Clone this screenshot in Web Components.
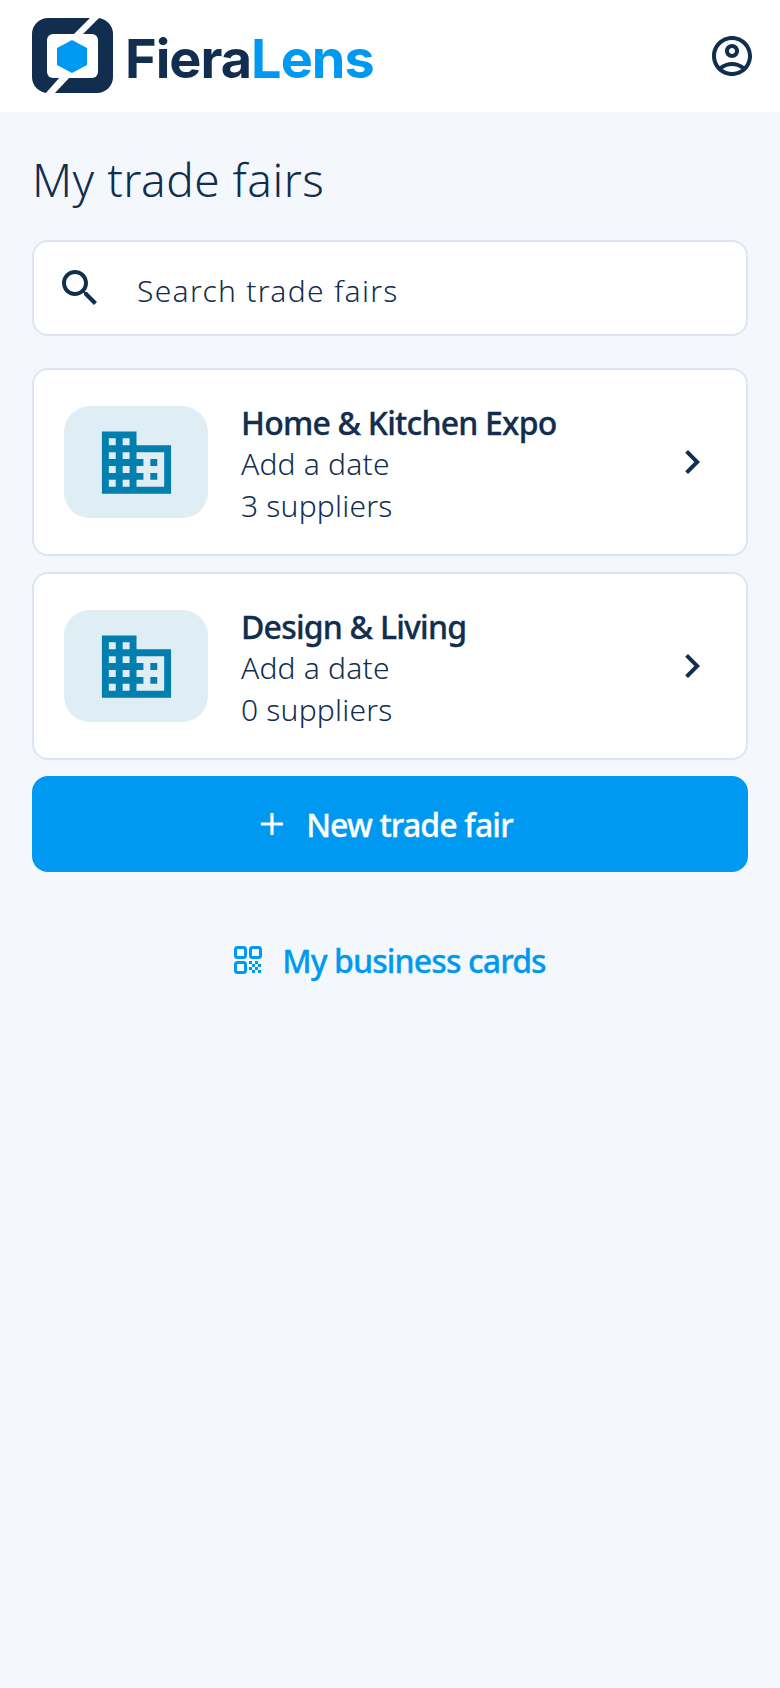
<!DOCTYPE html>
<html lang="en">
<head>
<meta charset="utf-8">
<title>FieraLens</title>
<style>
  html, body { margin: 0; padding: 0; background: #f4f8fd; }
  body { width: 780px; min-height: 1688px; font-family: "Noto Sans", "Open Sans", sans-serif; color: #112e4e; }
</style>
</head>
<body>
<app-header></app-header>
<fairs-page>
  <fair-card name="Home &amp; Kitchen Expo" date="Add a date" suppliers="3 suppliers"></fair-card>
  <fair-card name="Design &amp; Living" date="Add a date" suppliers="0 suppliers"></fair-card>
</fairs-page>

<script>
// --- Material paths ---
const ICONS = {
    account: 'M12 2C6.48 2 2 6.48 2 12s4.48 10 10 10 10-4.48 10-10S17.52 2 12 2zM7.35 18.5C8.66 17.56 10.26 17 12 17s3.34.56 4.65 1.5C15.34 19.44 13.74 20 12 20s-3.34-.56-4.65-1.5zm10.79-1.38C16.45 15.8 14.32 15 12 15s-4.45.8-6.14 2.12C4.7 15.73 4 13.95 4 12c0-4.42 3.58-8 8-8s8 3.58 8 8c0 1.95-.7 3.73-1.86 5.12zM12 6c-1.93 0-3.5 1.57-3.5 3.5S10.07 13 12 13s3.5-1.57 3.5-3.5S13.93 6 12 6zm0 5c-.83 0-1.5-.67-1.5-1.5S11.17 8 12 8s1.5.67 1.5 1.5S12.83 11 12 11z',
    search: 'M15.5 14h-.79l-.28-.27C15.41 12.59 16 11.11 16 9.5 16 5.91 13.09 3 9.5 3S3 5.91 3 9.5 5.91 16 9.5 16c1.61 0 3.09-.59 4.23-1.57l.27.28v.79l5 4.99L20.49 19l-4.99-5zm-6 0C7.01 14 5 11.99 5 9.5S7.01 5 9.5 5 14 7.01 14 9.5 11.99 14 9.5 14z',
    domain: 'M12 7V3H2v18h20V7H12zM6 19H4v-2h2v2zm0-4H4v-2h2v2zm0-4H4V9h2v2zm0-4H4V5h2v2zm4 12H8v-2h2v2zm0-4H8v-2h2v2zm0-4H8V9h2v2zm0-4H8V5h2v2zm10 12h-8v-2h2v-2h-2v-2h2v-2h-2V9h8v10zm-2-8h-2v2h2v-2zm0 4h-2v2h2v-2z',
    chevron: 'M10 6L8.59 7.41 13.17 12l-4.58 4.59L10 18l6-6z',
    add: 'M19 13h-6v6h-2v-6H5v-2h6V5h2v6h6v2z'
};

class AppIcon extends HTMLElement {
    connectedCallback() {
        const size = this.getAttribute('size') || 48;
        this.attachShadow({ mode: 'open' }).innerHTML = `
            <style>
                :host { display: block; flex: none; width: ${size}px; height: ${size}px; }
                svg { display: block; width: 100%; height: 100%; fill: currentColor; }
            </style>
            <svg viewBox="0 0 24 24"><path d="${ICONS[this.getAttribute('name')]}"/></svg>
        `;
    }
}

class AppHeader extends HTMLElement {
    connectedCallback() {
        this.attachShadow({ mode: 'open' }).innerHTML = `
            <style>
                :host {
                    display: flex;
                    align-items: center;
                    justify-content: space-between;
                    height: 112px;
                    padding: 0 24px 0 32px;
                    background: #fff;
                    color: #112e4e;
                }
                .logo { display: flex; align-items: center; gap: 11px; }
                svg { display: block; }
                .word {
                    padding-top: 5px;
                    font-family: Inter, sans-serif;
                    font-weight: 700;
                    font-size: 54px;
                    line-height: 60px;
                    letter-spacing: -1px;
                    color: #112e4e;
                }
                .word b { font-weight: 700; color: #0099f2; }
            </style>
            <div class="logo">
                <svg width="82" height="76" viewBox="32 18 82 76">
                    <rect x="32" y="18" width="81" height="75" rx="16" fill="#112e4e"/>
                    <rect x="47" y="34" width="51" height="44" rx="6" fill="#fff"/>
                    <path d="M90 18h9L83 34h-9zM60 77h10L54 94h-9z" fill="#fff"/>
                    <path d="M72 40l15 8v17l-15 8-15-8V48z" fill="#0099f2"/>
                </svg>
                <span class="word">Fiera<b>Lens</b></span>
            </div>
            <app-icon name="account"></app-icon>
        `;
    }
}

class FairsPage extends HTMLElement {
    connectedCallback() {
        this.attachShadow({ mode: 'open' }).innerHTML = `
            <style>
                :host { display: block; padding: 30px 32px 0; }
                h1 {
                    margin: 0 0 24px;
                    font-size: 46px;
                    line-height: 74px;
                    font-weight: 300;
                    letter-spacing: 0.5px;
                    color: #112e4e;
                }
                .list { display: flex; flex-direction: column; gap: 16px; margin: 32px 0 16px; }
                a {
                    display: flex;
                    align-items: center;
                    justify-content: center;
                    gap: 20px;
                    margin-top: 64px;
                    height: 48px;
                    font-size: 32px;
                    font-weight: 500;
                    letter-spacing: -0.9px;
                    -webkit-text-stroke: 0.3px #0099f2;
                    color: #0099f2;
                    text-decoration: none;
                }
            </style>
            <h1>My trade fairs</h1>
            <search-box>Search trade fairs</search-box>
            <div class="list"><slot></slot></div>
            <primary-button>New trade fair</primary-button>
            <a href="#">
                <svg width="28" height="28" viewBox="0 0 28 28" fill="none" stroke="#0099f2" stroke-width="3">
                    <rect x="1.5" y="1.5" width="10" height="10" rx="2"/>
                    <rect x="16.5" y="1.5" width="10" height="10" rx="2"/>
                    <rect x="1.5" y="16.5" width="10" height="10" rx="2"/>
                    <path stroke="none" fill="#0099f2" d="M15 15h3v3h-3zM21 15h3v3h-3zM18 18h3v3h-3zM24 18h3v3h-3zM15 21h3v3h-3zM21 21h3v3h-3zM18 24h3v3h-3zM24 24h3v3h-3z"/>
                </svg>
                <span>My business cards</span>
            </a>
        `;
    }
}

class SearchBox extends HTMLElement {
    connectedCallback() {
        this.attachShadow({ mode: 'open' }).innerHTML = `
            <style>
                :host {
                    display: flex;
                    align-items: center;
                    gap: 33px;
                    box-sizing: border-box;
                    height: 96px;
                    padding: 0 22px;
                    background: #fff;
                    border: 2px solid #dbe6f2;
                    border-radius: 16px;
                    font-size: 30px;
                    font-weight: 300;
                    letter-spacing: 1.3px;
                    color: #112e4e;
                }
                span { padding-top: 4px; }
            </style>
            <app-icon name="search"></app-icon>
            <span><slot></slot></span>
        `;
    }
}

class FairCard extends HTMLElement {
    connectedCallback() {
        this.attachShadow({ mode: 'open' }).innerHTML = `
            <style>
                :host {
                    display: flex;
                    align-items: center;
                    box-sizing: border-box;
                    height: 188px;
                    padding: 0 30px;
                    background: #fff;
                    border: 2px solid #dbe6f2;
                    border-radius: 16px;
                    color: #112e4e;
                }
                .thumb {
                    display: flex;
                    align-items: center;
                    justify-content: center;
                    flex: none;
                    width: 144px;
                    height: 112px;
                    margin-right: 33px;
                    border-radius: 26px;
                    background: #dfeef5;
                    color: #027fae;
                }
                .text { flex: 1; font-size: 30px; line-height: 42px; font-weight: 300; padding-top: 3px; letter-spacing: 0.2px; }
                .name { font-size: 32px; font-weight: 500; letter-spacing: -0.8px; -webkit-text-stroke: 0.3px #112e4e; padding-top: 1px; margin-bottom: -1px; }
            </style>
            <div class="thumb"><app-icon name="domain" size="83"></app-icon></div>
            <div class="text">
                <div class="name">${this.getAttribute('name').replace('&', '&amp;')}</div>
                <div>${this.getAttribute('date')}</div>
                <div>${this.getAttribute('suppliers')}</div>
            </div>
            <app-icon name="chevron"></app-icon>
        `;
    }
}

class PrimaryButton extends HTMLElement {
    connectedCallback() {
        this.attachShadow({ mode: 'open' }).innerHTML = `
            <style>
                :host {
                    display: flex;
                    align-items: center;
                    justify-content: center;
                    gap: 15px;
                    height: 96px;
                    padding-right: 14px;
                    border-radius: 16px;
                    background: #0099f2;
                    color: #fff;
                    font-size: 32px;
                    font-weight: 500;
                    letter-spacing: -0.85px;
                    -webkit-text-stroke: 0.3px #fff;
                }
            </style>
            <app-icon name="add" size="38"></app-icon>
            <span><slot></slot></span>
        `;
    }
}

customElements.define('app-icon', AppIcon);
customElements.define('app-header', AppHeader);
customElements.define('search-box', SearchBox);
customElements.define('fair-card', FairCard);
customElements.define('primary-button', PrimaryButton);
customElements.define('fairs-page', FairsPage);
</script>
</body>
</html>
